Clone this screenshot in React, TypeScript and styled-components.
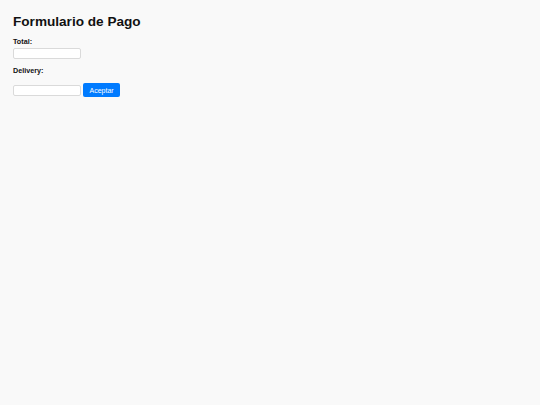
import React from 'react';
import styled, { createGlobalStyle } from 'styled-components';

const GlobalStyle = createGlobalStyle`
  html, body {
    margin: 0;
    padding: 0;
    background: #f9f9f9;
  }
  body {
    font-family: 'Liberation Sans', Arial, sans-serif;
    color: #111;
  }
`;

const Page = styled.div`
  min-height: 405px;
  padding: 13px 13px;
  box-sizing: border-box;
`;

const Title = styled.h1`
  margin: 0 0 7px 0;
  font-size: 13.6px;
  line-height: 17px;
  font-weight: 700;
`;

const Field = styled.div`
  display: flex;
  flex-direction: column;
  align-items: flex-start;
  gap: 2px;
  margin-bottom: 7px;
`;

const Label = styled.label`
  font-size: 7.2px;
  line-height: 9px;
  font-weight: 700;
`;

const Input = styled.input`
  width: 68px;
  height: 11px;
  box-sizing: border-box;
  margin: 0;
  padding: 0 3px;
  border: 1px solid #dadada;
  border-radius: 2px;
  background: #fff;
  font-size: 7px;
  font-family: inherit;
`;

const Row = styled.div`
  display: flex;
  align-items: center;
  gap: 2px;
  margin-top: 8px;
`;

const Button = styled.button`
  height: 14px;
  padding: 0 6.5px;
  margin: 0;
  border: none;
  border-radius: 2px;
  background: #007bff;
  color: #fff;
  font-size: 7px;
  font-family: inherit;
`;

export default function App() {
  return (
    <>
      <GlobalStyle />
      <Page>
        <Title>Formulario de Pago</Title>
        <Field>
          <Label htmlFor="total">Total:</Label>
          <Input id="total" type="text" />
        </Field>
        <Field>
          <Label>Delivery:</Label>
        </Field>
        <Row>
          <Input type="text" />
          <Button type="button">Aceptar</Button>
        </Row>
      </Page>
    </>
  );
}
